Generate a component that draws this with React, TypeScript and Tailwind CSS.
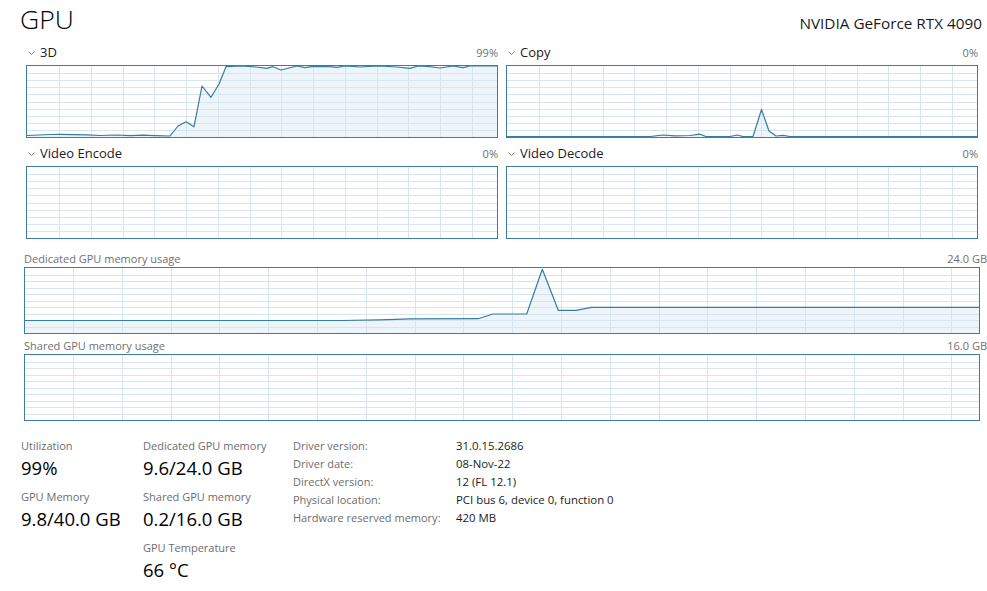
import React from "react";

type Pt = [number, number];

// points are in the chart's inner coords (inside the 1px border)
const threeD: Pt[] = [
  [0, 69.5], [23, 68.5], [33, 68.3], [60, 68.8], [73, 69.5], [90, 69], [103, 69.6],
  [116, 69.2], [128, 69.7], [143, 70], [151, 60], [159, 55.7], [167, 60.7], [175, 20],
  [184, 31.3], [192, 18], [199, 0.7], [215, 0], [229, 1], [240, 2.3], [246, 0.7],
  [254, 4], [270, 0], [278, 1.7], [286, 0.3], [303, 0.7], [310, 1.3], [318, 0],
  [333, 1], [351, 0], [370, 1], [383, 2.3], [391, 0], [403, 0.7], [413, 2], [426, 0],
  [436, 1.7], [443, 0], [470, 0],
];

const copy: Pt[] = [
  [0, 70.5], [143, 70.5], [156, 69], [168, 69.8], [183, 69.5], [193, 68.2], [199, 70.5],
  [223, 70.5], [230, 69], [236, 70.5], [246, 70.5], [254.5, 43.5], [262, 65], [269, 70],
  [276, 69.3], [283, 70.5], [470, 70.5],
];

const dedicated: Pt[] = [
  [0, 52.5], [315, 52.5], [355, 51.8], [385, 50.8], [453, 50.7], [468, 46], [501.7, 46],
  [517.3, 1.3], [533.3, 42.3], [551, 42.3], [566.7, 39.3], [954, 39.3],
];

function Chart({
  w,
  h,
  offset,
  step,
  data,
}: {
  w: number;
  h: number;
  offset: number;
  step: number;
  data?: Pt[];
}) {
  const iw = w - 2;
  const ih = h - 2;
  const rows = Array.from({ length: 9 }, (_, i) => Math.round(((i + 1) * ih) / 10) + 0.5);
  const cols: number[] = [];
  for (let x = offset; x < iw; x += step) cols.push(Math.round(x) + 0.5);
  const line = data ? data.map((p) => p.join(",")).join(" ") : "";
  const area = data ? `${line} ${iw},${ih} 0,${ih}` : "";

  return (
    <div className="border border-[#3a7ea4] bg-white" style={{ width: w, height: h }}>
      <svg width={iw} height={ih} className="block">
        {data && <polygon points={area} fill="#eef5fa" />}
        {rows.map((y) => (
          <line key={"r" + y} x1={0} x2={iw} y1={y} y2={y} stroke="#d6e5ef" strokeWidth={1} />
        ))}
        {cols.map((x) => (
          <line key={"c" + x} x1={x} x2={x} y1={0} y2={ih} stroke="#d6e5ef" strokeWidth={1} />
        ))}
        {data && (
          <polyline points={line} fill="none" stroke="#367ca3" strokeWidth={1.2} strokeLinejoin="round" />
        )}
      </svg>
    </div>
  );
}

function Chevron() {
  return (
    <svg width="7" height="4" className="ml-[2px] mr-[5px]">
      <polyline points="0.5,0.5 3.5,3.5 6.5,0.5" fill="none" stroke="#8a8a8a" strokeWidth={1} />
    </svg>
  );
}

function SmallGraph({ title, pct, data }: { title: string; pct: string; data?: Pt[] }) {
  return (
    <div>
      <div className="h-[19px] flex items-center justify-between">
        <div className="flex items-center">
          <Chevron />
          <span className="text-[13px] leading-none text-[#1b1b1b]">{title}</span>
        </div>
        <span className="text-[11px] leading-none text-[#707070]">{pct}</span>
      </div>
      <div className="mt-[3px]">
        <Chart w={472} h={73} offset={32} step={31.75} data={data} />
      </div>
    </div>
  );
}

function MemGraph({ title, max, data }: { title: string; max: string; data?: Pt[] }) {
  return (
    <div>
      <div className="h-[14px] flex items-center justify-between text-[11px] leading-none text-[#707070]">
        <span>{title}</span>
        <span>{max}</span>
      </div>
      <div className="mt-[2px]">
        <Chart w={956} h={67} offset={48} step={48.8} data={data} />
      </div>
    </div>
  );
}

function Stat({ label, value }: { label: string; value: string }) {
  return (
    <div className="mb-[7px]">
      <div className="h-[18px] leading-[18px] text-[11px] text-[#6d6d6d]">{label}</div>
      <div className="h-[26px] leading-[26px] text-[18.5px] text-black">{value}</div>
    </div>
  );
}

const info: [string, string][] = [
  ["Driver version:", "31.0.15.2686"],
  ["Driver date:", "08-Nov-22"],
  ["DirectX version:", "12 (FL 12.1)"],
  ["Physical location:", "PCI bus 6, device 0, function 0"],
  ["Hardware reserved memory:", "420 MB"],
];

export default function App() {
  return (
    <div className="w-[987px] h-[591px] bg-white text-black font-['Open_Sans',sans-serif] overflow-hidden">
      <div className="h-[43px] flex items-baseline justify-between pt-[6px] pl-[20px] pr-[5px]">
        <span className="text-[26.5px] leading-none font-light">GPU</span>
        <span className="text-[15.3px] leading-none text-[#1b1b1b]">NVIDIA GeForce RTX 4090</span>
      </div>

      <div className="pl-[26px] grid grid-cols-[472px_472px] gap-x-[8px] gap-y-[6px]">
        <SmallGraph title="3D" pct="99%" data={threeD} />
        <SmallGraph title="Copy" pct="0%" data={copy} />
        <SmallGraph title="Video Encode" pct="0%" />
        <SmallGraph title="Video Decode" pct="0%" />
      </div>

      <div className="pl-[24px] mt-[12px]">
        <MemGraph title="Dedicated GPU memory usage" max="24.0 GB" data={dedicated} />
        <div className="mt-[4px]">
          <MemGraph title="Shared GPU memory usage" max="16.0 GB" />
        </div>
      </div>

      <div className="mt-[16px] pl-[21px] flex">
        <div className="w-[122px]">
          <Stat label="Utilization" value="99%" />
          <Stat label="GPU Memory" value="9.8/40.0 GB" />
        </div>
        <div className="w-[150px]">
          <Stat label="Dedicated GPU memory" value="9.6/24.0 GB" />
          <Stat label="Shared GPU memory" value="0.2/16.0 GB" />
          <Stat label="GPU Temperature" value="66 °C" />
        </div>
        <div className="text-[11px] leading-[18px]">
          {info.map(([k, v]) => (
            <div key={k} className="flex">
              <span className="w-[163px] text-[#6d6d6d]">{k}</span>
              <span className="text-[11.4px] text-[#1b1b1b]">{v}</span>
            </div>
          ))}
        </div>
      </div>
    </div>
  );
}
